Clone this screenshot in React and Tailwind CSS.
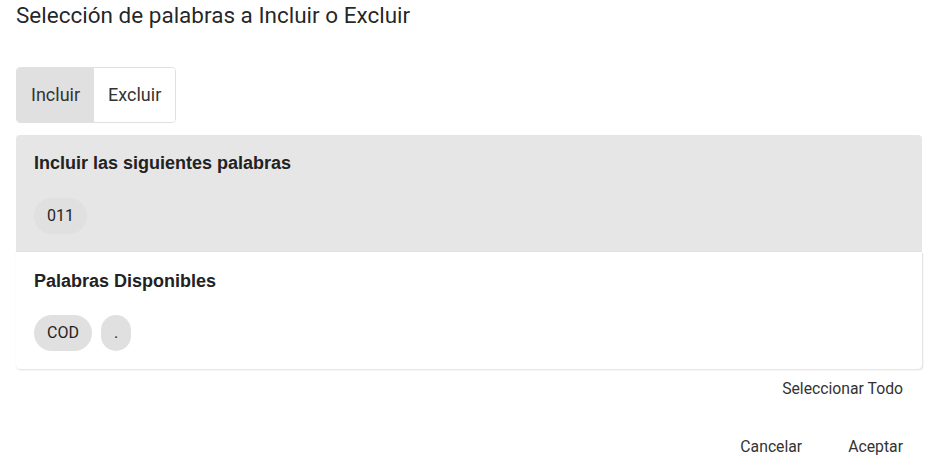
import React, { useState } from "react";

const included = ["011"];
const available = ["COD", "."];

function Chip({ label }) {
  return (
    <span className="inline-flex h-9 items-center rounded-full bg-[#e0e0e0] px-[13px] text-base text-[#1f1f1f]">
      {label}
    </span>
  );
}

export default function App() {
  const [mode, setMode] = useState("incluir");

  return (
    <div className="min-h-screen w-[935px] bg-white text-[rgba(0,0,0,0.87)]" style={{ fontFamily: "Roboto, sans-serif" }}>
      {/* Title */}
      <h2 className="px-4 text-[22.5px] leading-[30px] font-normal">
        Selección de palabras a Incluir o Excluir
      </h2>

      {/* Toggle */}
      <div className="mt-[37px] ml-4 inline-flex h-[56px] overflow-hidden rounded border border-[#e0e0e0] text-lg">
        <button
          onClick={() => setMode("incluir")}
          className={`px-[14px] ${mode === "incluir" ? "bg-[#e0e0e0]" : "bg-white"} text-[#333]`}
        >
          Incluir
        </button>
        <button
          onClick={() => setMode("excluir")}
          className={`px-[14px] ${mode === "excluir" ? "bg-[#e0e0e0]" : "bg-white"} text-[#333]`}
        >
          Excluir
        </button>
      </div>

      {/* Panels */}
      <div className="mt-3 ml-4 w-[906px]">
        <div className="rounded-t bg-[#e6e6e6] px-[18px] pt-4 pb-[18px]">
          <div className="h-6 text-lg leading-6 font-bold text-[#222]" style={{ fontFamily: "'Liberation Sans', Arial, sans-serif" }}>
            Incluir las siguientes palabras
          </div>
          <div className="mt-[23px] flex gap-[9px]">
            {included.map((w) => (
              <Chip key={w} label={w} />
            ))}
          </div>
        </div>
        <div className="rounded-b bg-white px-[18px] pt-[17px] pb-[18px] shadow-[1px_1px_2px_0_rgba(0,0,0,0.12),0_0_1px_0_rgba(0,0,0,0.12)]">
          <div className="h-6 text-lg leading-6 font-bold text-[#222]" style={{ fontFamily: "'Liberation Sans', Arial, sans-serif" }}>
            Palabras Disponibles
          </div>
          <div className="mt-[22px] flex gap-[9px]">
            {available.map((w) => (
              <Chip key={w} label={w} />
            ))}
          </div>
        </div>
      </div>

      {/* Actions */}
      <div className="mt-[2px] flex w-[911px] justify-end">
        <button className="px-2 py-[6px] text-[15.75px] leading-6 text-[#333]">Seleccionar Todo</button>
      </div>
      <div className="mt-[22px] flex w-[911px] justify-end gap-[30px]">
        <button className="px-2 py-[6px] text-[15.75px] leading-6 text-[#333]">Cancelar</button>
        <button className="px-2 py-[6px] text-[15.75px] leading-6 text-[#333]">Aceptar</button>
      </div>
    </div>
  );
}
